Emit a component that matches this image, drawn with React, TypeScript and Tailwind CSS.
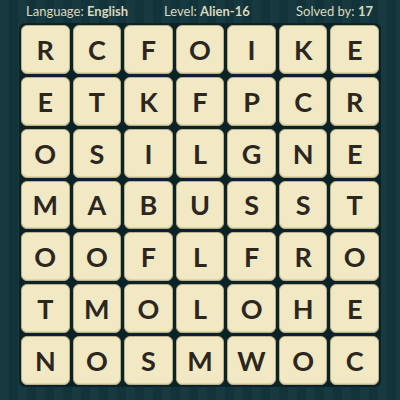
import React from 'react';

const rows = [
  'RCFOIKE',
  'ETKFPCR',
  'OSILGNE',
  'MABUSST',
  'OOFLFRO',
  'TMOLOHE',
  'NOSMWOC',
];

const App: React.FC = () => {
  return (
    <div className="w-[400px] h-[400px] overflow-hidden bg-[#15363c] bg-[repeating-linear-gradient(90deg,#163a40_0px,#163a40_9px,#13333a_9px,#13333a_18px)] font-['Lato','Open_Sans',sans-serif] flex flex-col">
      <div className="h-[24px] flex items-center pl-[26px] pr-[27px] text-[13px] text-[#dcd8bd]">
        <span>
          Language: <span className="font-bold">English</span>
        </span>
        <span className="ml-[36px]">
          Level: <span className="font-bold">Alien-16</span>
        </span>
        <span className="ml-auto">
          Solved by: <span className="font-bold">17</span>
        </span>
      </div>
      <div className="ml-[19px] mt-[-1px] w-[362px] h-[364px] bg-[#0b2226] rounded-[6px] p-[2px] grid grid-cols-7 gap-[3px]">
        {rows.map((row, r) =>
          row.split('').map((ch, c) => (
            <div
              key={`${r}-${c}`}
              className="rounded-[6px] bg-[#f0e9c4] border border-[#b9b08a] shadow-[inset_0_-1px_0_#ddd4a8] flex items-center justify-center text-[27px] font-bold text-[#2d261f] leading-none"
            >
              {ch}
            </div>
          ))
        )}
      </div>
    </div>
  );
};

export default App;
